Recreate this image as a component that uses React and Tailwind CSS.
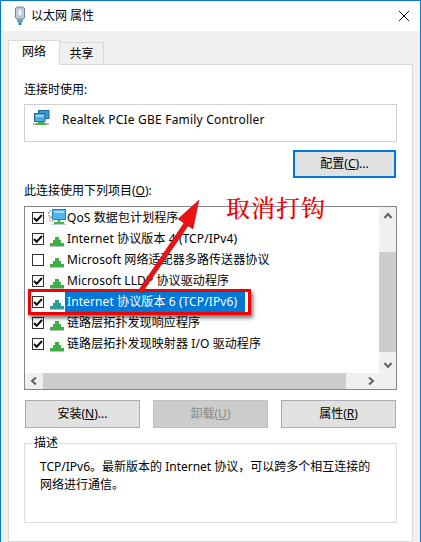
const FONT = "font-['Noto_Sans','Noto_Sans_CJK_SC',sans-serif]";

function Check({ on }) {
  return (
    <span className="flex h-[12px] w-[12px] shrink-0 items-center justify-center border border-[#333] bg-white">
      {on && (
        <svg width="10" height="10" viewBox="0 0 10 10">
          <path d="M1 5 L3.7 7.7 L9 2" fill="none" stroke="#111" strokeWidth="2" />
        </svg>
      )}
    </span>
  );
}

function NetIcon({ teal }) {
  const c = teal ? "#2d9a9a" : "#3fae49";
  return (
    <svg width="16" height="16" viewBox="0 0 16 16" className="mt-[3px] shrink-0">
      <rect x="6" y="5" width="4" height="4" fill={c} />
      <rect x="4" y="8" width="8" height="3" fill={c} />
      <rect x="1" y="11" width="14" height="3" fill={c} />
      <rect x="1" y="14" width="14" height="1" fill="#b9c4bb" />
    </svg>
  );
}

function QosIcon() {
  return (
    <svg width="18" height="17" viewBox="0 0 18 17" className="shrink-0">
      <circle cx="4" cy="5" r="3.4" fill="none" stroke="#9a9a9a" strokeWidth="1.6" strokeDasharray="1.6 1" />
      <circle cx="4" cy="10" r="2.4" fill="none" stroke="#a5a5a5" strokeWidth="1.4" strokeDasharray="1.4 1" />
      <rect x="4.5" y="0.5" width="13" height="10" fill="#4fb4ec" stroke="#2f7fb5" />
      <rect x="6" y="2" width="10" height="2" fill="#9fdcff" />
      <rect x="9.5" y="11" width="3" height="2" fill="#5ab85f" />
      <rect x="6" y="13" width="10" height="2" fill="#4fae55" />
      <rect x="4" y="15" width="14" height="1" fill="#c2c9c3" />
    </svg>
  );
}

function AdapterIcon() {
  return (
    <svg width="17" height="16" viewBox="0 0 17 16">
      <rect x="5.5" y="0.5" width="10.5" height="8" fill="#3e9bd6" stroke="#20689a" />
      <rect x="1.5" y="3.5" width="10.5" height="8" fill="#4cabe4" stroke="#20689a" />
      <rect x="3" y="5" width="7.5" height="2" fill="#9ad8fb" />
      <rect x="5" y="11.5" width="6" height="2" fill="#3fae49" />
      <rect x="3" y="13" width="10" height="2" fill="#41b24c" />
      <rect x="0" y="13" width="3" height="2" fill="#b8bdb9" />
      <rect x="13" y="13" width="3" height="2" fill="#b8bdb9" />
    </svg>
  );
}

function Row({ on, icon, selected, children }) {
  return (
    <div className="flex h-[21px] items-center pl-[7px]">
      <Check on={on} />
      <span className="ml-[5px] flex h-[21px] w-[16px] shrink-0 items-center justify-center">
        {icon || <NetIcon teal={selected} />}
      </span>
      <span className={`flex h-[21px] items-center whitespace-nowrap pl-[2px] pr-[7px] pt-[1px] tracking-[0.1px] ${selected ? "w-[180px] bg-[#0078d7] text-white" : "text-black"}`}>
        {children}
      </span>
    </div>
  );
}

function Btn({ children, disabled, primary, className = "" }) {
  const look = primary
    ? "border-2 border-[#0078d7] bg-[#e1e1e1] text-black"
    : disabled
    ? "border border-[#bfbfbf] bg-[#cccccc] text-[#8a8a8a]"
    : "border border-[#adadad] bg-[#e1e1e1] text-black";
  return (
    <div className={`flex h-[28px] items-center justify-center ${look} ${className}`}>{children}</div>
  );
}

function Chevron({ d }) {
  return (
    <svg width="10" height="10" viewBox="0 0 10 10">
      <path d={d} fill="none" stroke="#606060" strokeWidth="2" />
    </svg>
  );
}

export default function App() {
  return (
    <div className={`relative flex h-[542px] w-[421px] flex-col overflow-hidden border-x border-t border-[#0a78c8] bg-[#f0f0f0] text-[12px] leading-[18px] text-black ${FONT}`}>
      {/* title bar */}
      <div className="flex h-[30px] shrink-0 items-center bg-white pl-[11px] pr-[7px]">
        <svg width="16" height="20" viewBox="0 0 16 20" className="shrink-0">
          <rect x="3.5" y="1" width="9" height="12" rx="2" fill="#c5d3de" stroke="#6d8192" />
          <rect x="6" y="3" width="4" height="7" fill="#f2f6f9" stroke="#8ba0b1" strokeWidth="0.6" />
          <rect x="5" y="13" width="6" height="3" fill="#7f9db3" />
          <rect x="6.5" y="16" width="3" height="3" fill="#1f8fd0" />
        </svg>
        <span className="ml-[3px]">以太网 属性</span>
        <svg width="12" height="12" viewBox="0 0 12 12" className="ml-auto mr-[3px]">
          <path d="M1 1 L11 11 M11 1 L1 11" stroke="#111" strokeWidth="1" />
        </svg>
      </div>

      {/* tabs */}
      <div className="flex h-[33px] shrink-0 items-end pl-[7px]">
        <div className="z-10 -mb-px flex h-[25px] w-[52px] items-center justify-center border border-b-0 border-[#d9d9d9] bg-white pb-[3px]">网络</div>
        <div className="flex h-[22px] w-[44px] items-center justify-center border border-b-0 border-l-0 border-[#d9d9d9] pt-[1px]">共享</div>
      </div>

      {/* panel */}
      <div className="mx-[7px] flex min-h-0 flex-1 flex-col border border-[#d9d9d9] bg-white px-[15px] pt-[15px]">
        <div className="h-[18px] pt-[1px]">连接时使用:</div>
        <div className="mt-[6px] flex h-[38px] w-[373px] shrink-0 items-start border border-[#d0d0d0] pl-[8px] pt-[5px]">
          <AdapterIcon />
          <span className="ml-[12px] whitespace-nowrap pt-[1px] leading-[18px] tracking-[0.2px]">Realtek PCIe GBE Family Controller</span>
        </div>
        <div className="mt-[8px] flex w-[372px] justify-end">
          <Btn primary className="w-[103px]">配置(<u>C</u>)...</Btn>
        </div>

        <div className="mt-[3px] h-[18px] pt-[1px]">此连接使用下列项目(<u>O</u>):</div>

        <div className="relative mt-[7px] flex h-[184px] w-[373px] shrink-0 flex-col border border-[#828790]">
          <div className="flex min-h-0 flex-1">
            <div className="min-w-0 flex-1">
              <Row on icon={<QosIcon />}>QoS 数据包计划程序</Row>
              <Row on>Internet 协议版本 4 (TCP/IPv4)</Row>
              <Row>Microsoft 网络适配器多路传送器协议</Row>
              <Row on>Microsoft LLDP 协议驱动程序</Row>
              <Row on selected>Internet 协议版本 6 (TCP/IPv6)</Row>
              <Row on>链路层拓扑发现响应程序</Row>
              <Row on>链路层拓扑发现映射器 I/O 驱动程序</Row>
            </div>
            {/* vertical scrollbar */}
            <div className="flex w-[17px] shrink-0 flex-col bg-[#f0f0f0]">
              <div className="flex h-[17px] items-center justify-center"><Chevron d="M1.5 7 L5 3 L8.5 7" /></div>
              <div className="h-[28px]" />
              <div className="h-[100px] bg-[#cdcdcd]" />
              <div className="flex-1" />
              <div className="flex h-[17px] items-center justify-center"><Chevron d="M1.5 3 L5 7 L8.5 3" /></div>
            </div>
          </div>
          {/* horizontal scrollbar */}
          <div className="flex h-[16px] shrink-0 bg-[#f0f0f0]">
            <div className="flex w-[18px] items-center justify-center"><Chevron d="M7 1.5 L3 5 L7 8.5" /></div>
            <div className="w-[303px] bg-[#cdcdcd]" />
            <div className="flex-1" />
            <div className="flex w-[50px] items-center justify-center"><Chevron d="M3 1.5 L7 5 L3 8.5" /></div>
          </div>
        </div>

        <div className="mt-[10px] flex w-[372px] justify-between pl-[1px]">
          <Btn className="w-[115px]">安装(<u>N</u>)...</Btn>
          <Btn disabled className="w-[115px]">卸载(<u>U</u>)</Btn>
          <Btn className="w-[115px]">属性(<u>R</u>)</Btn>
        </div>

        <div className="relative mt-[15px] h-[80px] w-[373px] shrink-0 border border-[#dcdcdc] pl-[15px] pr-[20px] pt-[14px]">
          <span className="absolute -top-[10px] left-[8px] bg-white px-[1px]">描述</span>
          <p className="leading-[18px]">TCP/IPv6。最新版本的 Internet 协议，可以跨多个相互连接的网络进行通信。</p>
        </div>
      </div>

      {/* annotation overlays */}
      <div className="pointer-events-none absolute left-[27px] top-[288px] h-[26px] w-[223px] border-[3px] border-[#f00000] shadow-[2px_3px_4px_rgba(0,0,0,0.55)]" />
      <svg className="pointer-events-none absolute left-[-1px] top-[-1px]" width="421" height="542" viewBox="0 0 421 542">
        <path d="M142 293 L188 226 L193 229 L199 200 L178 219 L184 223 L138 291 Z" fill="#ee1111" stroke="#8a2020" strokeWidth="0.5" />
      </svg>
      <span className="pointer-events-none absolute left-[225px] top-[190px] whitespace-nowrap font-['Noto_Serif_CJK_SC','Noto_Sans_CJK_SC',serif] text-[24px] font-medium leading-[32px] tracking-[1px] text-[#f00000]">取消打钩</span>
    </div>
  );
}
